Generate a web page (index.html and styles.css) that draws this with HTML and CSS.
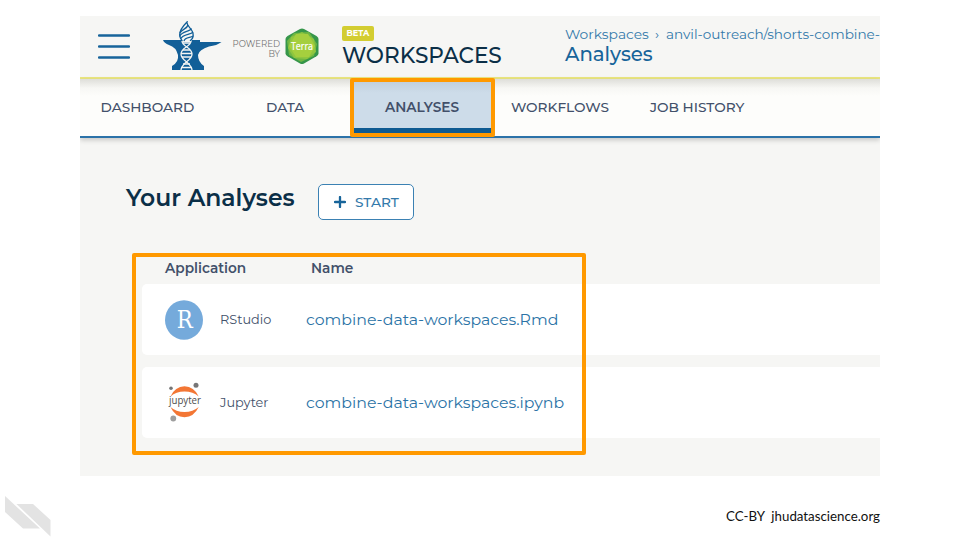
FILE: index.html
```html
<!DOCTYPE html>
<html lang="en">
<head>
<meta charset="utf-8">
<title>Workspaces - Analyses</title>
<link rel="stylesheet" href="styles.css">
</head>
<body>
<main class="app">
  <header class="topbar">
    <svg class="menu" viewBox="0 0 32 27" width="32" height="27"><path d="M1 1.500H31M1 12.500H31M1 23.500H31" stroke="#17649a" stroke-width="2.300" stroke-linecap="round"/></svg>
    <svg class="anvil" viewBox="0 0 60 50" width="60" height="50">
      <path d="M1 19H38V21H59.500Q55 24.500 47 25.500Q37 28.500 36 34Q36 41 42 45V49H10V45Q17 41 16 34Q14 26 7 24Q2 22 1 19Z" fill="#125f98"/>
      <path d="M21 20C15 14 17 8 25 1Q25 4 27 6Q33 11 31 17L29 21H20Z" fill="#f6f6f4"/>
      <g fill="none" stroke="#125f98" stroke-width="1.300">
        <path d="M20 19.500C15 14 18 8 25 1C24 5 31 8 31 13Q32 17 28 20"/>
        <path d="M18 12C20 8 25 8 26 4M17.500 15.500C20 10 28 11 29.500 7.500M18.500 18C21 13 29 14 31 11M22 20C23 16 29 17 31 15"/>
      </g>
      <g fill="none" stroke="#f6f6f4" stroke-width="1.300">
        <path d="M20 20C20 26 30 26 30 33S20 41 19 49M29 20C29 26 19 26 19 33S29 41 30 49"/>
        <path d="M21 22H28M21 29H28M19 32.500H30M20 36H29M21 43H28M19 46.500H30"/>
      </g>
    </svg>
    <div class="powered">POWERED<br>BY</div>
    <svg class="terra" viewBox="0 0 34 37" width="34" height="37">
      <path d="M15 1Q17 0 19 1L31.500 8Q33.500 9.300 33.500 11V25.500Q33.500 27 31.500 28.300L19 35.500Q17 36.500 15 35.500L2.500 28.300Q.5 27 .5 25.500V11Q.5 9.300 2.500 8Z" fill="#36964a"/>
      <path d="M9 5L24 4L32 16L29 28L16 34L4 27L2 13Z" fill="#6fb643"/>
      <path d="M17 4L29 11L31 24L22 31L9 30L3 20L6 9Z" fill="#8fc63f"/>
      <path d="M11 6L23 6L30 18L24 29L11 29L4 18Z" fill="#a5cf3e"/>
      <text x="17" y="22" text-anchor="middle" textLength="22" lengthAdjust="spacingAndGlyphs" font-family="Open Sans, sans-serif" font-size="11" fill="#fff" stroke="#fff" stroke-width=".2">Terra</text>
    </svg>
    <div class="brand"><span class="beta">BETA</span><span class="brand-name">WORKSPACES</span></div>
    <div class="crumbs">
      <div class="path"><span class="root">Workspaces</span><span class="sep">›</span><span class="project">anvil-outreach/shorts-combine-</span></div>
      <h1>Analyses</h1>
    </div>
  </header>
  <nav class="tabs">
    <a class="tab dashboard">DASHBOARD</a>
    <a class="tab data">DATA</a>
    <a class="tab active"><span>ANALYSES</span></a>
    <a class="tab workflows">WORKFLOWS</a>
    <a class="tab history">JOB HISTORY</a>
  </nav>
  <section class="content">
    <div class="heading">
      <h2>Your Analyses</h2>
      <button class="start"><svg viewBox="0 0 12 12" width="12" height="12"><path d="M6 1V11M1 6H11" stroke="#17649a" stroke-width="2.300" stroke-linecap="round"/></svg><span>START</span></button>
    </div>
    <div class="table">
      <div class="row head"><span class="th-app">Application</span><span class="th-name">Name</span></div>
      <div class="row card">
        <svg class="logo" viewBox="0 0 38 40" width="38" height="40"><ellipse cx="19" cy="20" rx="19" ry="19.800" fill="#75aadb"/><text x="19.800" y="27.600" text-anchor="middle" font-family="DejaVu Serif, serif" font-size="24" textLength="16" lengthAdjust="spacingAndGlyphs" fill="#fff">R</text></svg>
        <span class="app-name">RStudio</span><a class="file">combine-data-workspaces.Rmd</a>
      </div>
      <div class="row card">
        <svg class="logo" viewBox="0 0 38 40" width="38" height="40">
          <path d="M5.500 14.500Q10 4.500 19.500 4.300Q29 4.500 33.700 14.500Q28 9.500 19.500 9.500Q11 9.500 5.500 14.500ZM5.500 25Q11 30 19.500 30Q28 30 33.700 25Q29 35 19.500 35.200Q10 35 5.500 25Z" fill="#f37634"/>
          <circle cx="31" cy="3.300" r="2.500" fill="#767677"/><circle cx="6" cy="6.300" r="1.800" fill="#767677"/><circle cx="8.300" cy="36.500" r="2.900" fill="#9e9e9e"/>
          <text x="4" y="22.300" textLength="32" lengthAdjust="spacingAndGlyphs" font-family="Open Sans, sans-serif" font-size="10.300" fill="#4e4e4e">jupyter</text>
        </svg>
        <span class="app-name">Jupyter</span><a class="file">combine-data-workspaces.ipynb</a>
      </div>
    </div>
  </section>
  <div class="highlight highlight-tab"></div>
  <div class="highlight highlight-table"></div>
</main>
<footer class="footer">
  <svg viewBox="0 0 46 41" width="46" height="41"><path d="M0 0L35 32.500H18L0 16ZM11.500 8H28L45.500 24V40.500Z" fill="#e3e3e3"/></svg>
  <div class="credit">CC-BY&nbsp; jhudatascience.org</div>
</footer>
</body>
</html>
```
FILE: styles.css
```css
* { box-sizing: border-box; }
body {
  margin: 0;
  width: 960px;
  height: 540px;
  overflow: hidden;
  background: #fff;
  color: #42506a;
  font-family: Montserrat, Inter, sans-serif;
  white-space: nowrap;
}
h1, h2 { margin: 0; }
.app {
  position: relative;
  width: 800px;
  height: 459.500px;
  margin: 16px 80px 0;
  overflow: hidden;
  background: #f6f6f4;
}
.topbar {
  display: flex;
  align-items: flex-start;
  height: 63px;
  padding-left: 18px;
  border-bottom: 2px solid #ebe780;
}
.topbar > * { flex: none; }
.menu { margin-top: 18px; }
.anvil { margin: 5px 0 0 32px; }
.powered {
  width: 58px;
  margin-top: 23px;
  font-size: 8.600px;
  line-height: 10px;
  text-align: right;
  color: #737373;
}
.terra { margin: 12px 0 0 5px; }
.brand {
  display: flex;
  flex-direction: column;
  align-items: flex-start;
  width: 223px;
  margin: 10px 0 0 23px;
}
.beta {
  width: 32px;
  height: 15px;
  border-radius: 2px;
  background: #d3cd31;
  color: #fff;
  font-size: 8.200px;
  font-weight: 700;
  line-height: 15px;
  text-align: center;
}
.brand-name {
  margin-top: 1px;
  color: #0b2f47;
  font-size: 21.600px;
  font-weight: 500;
  line-height: 27px;
}
.crumbs { width: 315px; padding-top: 9px; }
.path { display: flex; font-size: 13.850px; line-height: 19px; color: #3379aa; }
.root { width: 90px; }
.sep { width: 11px; }
.project { font-size: 13.600px; letter-spacing: -0.050px; }
h1 { color: #17649a; font-size: 19.700px; font-weight: 500; line-height: 20px; }
.tabs {
  display: flex;
  height: 59px;
  border-bottom: 2.500px solid #2b72a8;
  background: linear-gradient(#deded9, #f7f7f4 9px, #fdfdfb 17px);
  box-shadow: 0 2px 5px #0003;
  font-size: 13.700px;
  font-weight: 500;
  line-height: 56px;
}
.dashboard { width: 186px; padding-left: 20.500px; }
.data { width: 85px; }
.active {
  width: 143px;
  height: 54px;
  padding-left: 34px;
  border-bottom: 5px solid #0f5b92;
  background: linear-gradient(#becddb, #cddce9 14px);
  font-weight: 600;
}
.workflows { width: 139px; padding-left: 17px; }
.history { padding-left: 17px; }
.content { padding-top: 45px; }
.heading { display: flex; align-items: flex-start; height: 69px; padding-left: 46px; }
h2 {
  width: 192px;
  color: #0b2f47;
  font-size: 23.500px;
  font-weight: 600;
  line-height: 30px;
}
.start {
  display: flex;
  align-items: center;
  gap: 9px;
  width: 96px;
  height: 36px;
  margin-top: 1px;
  padding: 0 0 0 15px;
  border: 1px solid #3b81b3;
  border-radius: 5px;
  background: #fff;
  color: #3379aa;
  font: 500 13.700px Montserrat, Inter, sans-serif;
}
.table { padding-left: 62px; }
.row { display: flex; align-items: center; }
.head { height: 32px; padding-left: 23px; font-size: 13.700px; font-weight: 600; }
.th-app { width: 146px; }
.card {
  height: 71px;
  margin-bottom: 11.500px;
  padding-left: 23px;
  border-radius: 5px 0 0 5px;
  background: #fff;
}
.logo { flex: none; }
.app-name { width: 86px; margin-left: 17px; font-size: 12.850px; }
.file { color: #2b73a6; font-size: 15.750px; }
.highlight { position: absolute; border: 4px solid #ff9900; border-radius: 2px; }
.highlight-tab { left: 269.500px; top: 62px; width: 145px; height: 58.500px; }
.highlight-table { left: 52px; top: 236.500px; width: 453.500px; height: 202.500px; }
.footer { display: flex; justify-content: space-between; height: 64px; padding: 20.500px 80px 0 4.500px; }
.credit { color: #111; font: 13.300px/40px Lato, sans-serif; }
```
